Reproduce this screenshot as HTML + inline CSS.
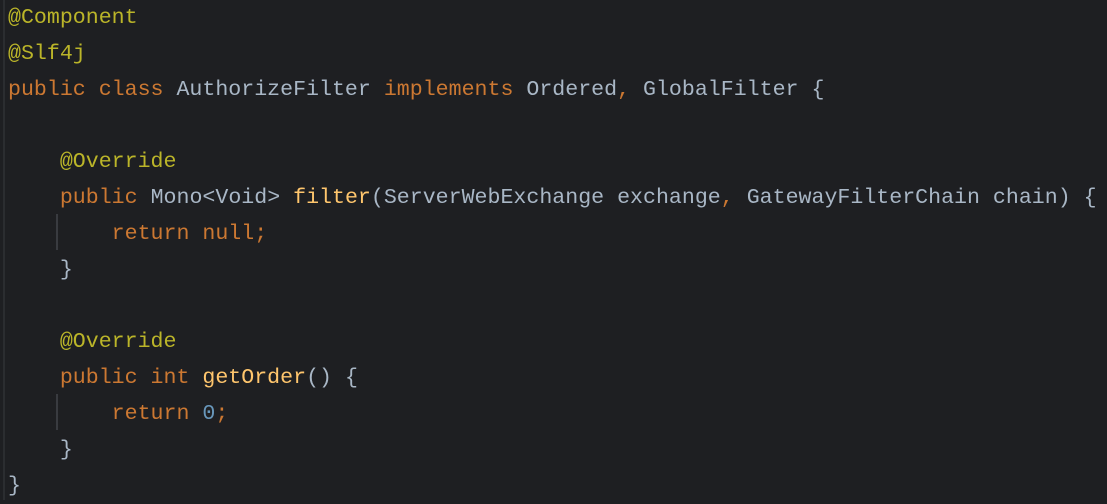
<!DOCTYPE html>
<html><head><style>
html,body{margin:0;padding:0;width:1107px;height:500px;overflow:hidden;background:#1e1f22;}
.l{position:absolute;left:3px;top:0;width:2px;height:500px;background:#2b2d30;}
pre{position:absolute;left:8px;top:0px;margin:0;font-family:"Liberation Mono",monospace;font-size:21.6px;line-height:36px;color:#a9b7c6;}
.k{color:#cc7832}.a{color:#bbb529}.m{color:#ffc66d}.n{color:#6897bb}
.g{position:absolute;left:56px;width:2px;background:#393b40;}
</style></head><body>
<div class="l"></div>
<div class="g" style="top:214px;height:36px"></div>
<div class="g" style="top:394px;height:36px"></div>
<pre><span class="a">@Component</span>
<span class="a">@Slf4j</span>
<span class="k">public class </span>AuthorizeFilter <span class="k">implements </span>Ordered<span class="k">, </span>GlobalFilter {

    <span class="a">@Override</span>
    <span class="k">public </span>Mono&lt;Void&gt; <span class="m">filter</span>(ServerWebExchange exchange<span class="k">, </span>GatewayFilterChain chain) {
        <span class="k">return null;</span>
    }

    <span class="a">@Override</span>
    <span class="k">public int </span><span class="m">getOrder</span>() {
        <span class="k">return </span><span class="n">0</span><span class="k">;</span>
    }
}</pre>
</body></html>
